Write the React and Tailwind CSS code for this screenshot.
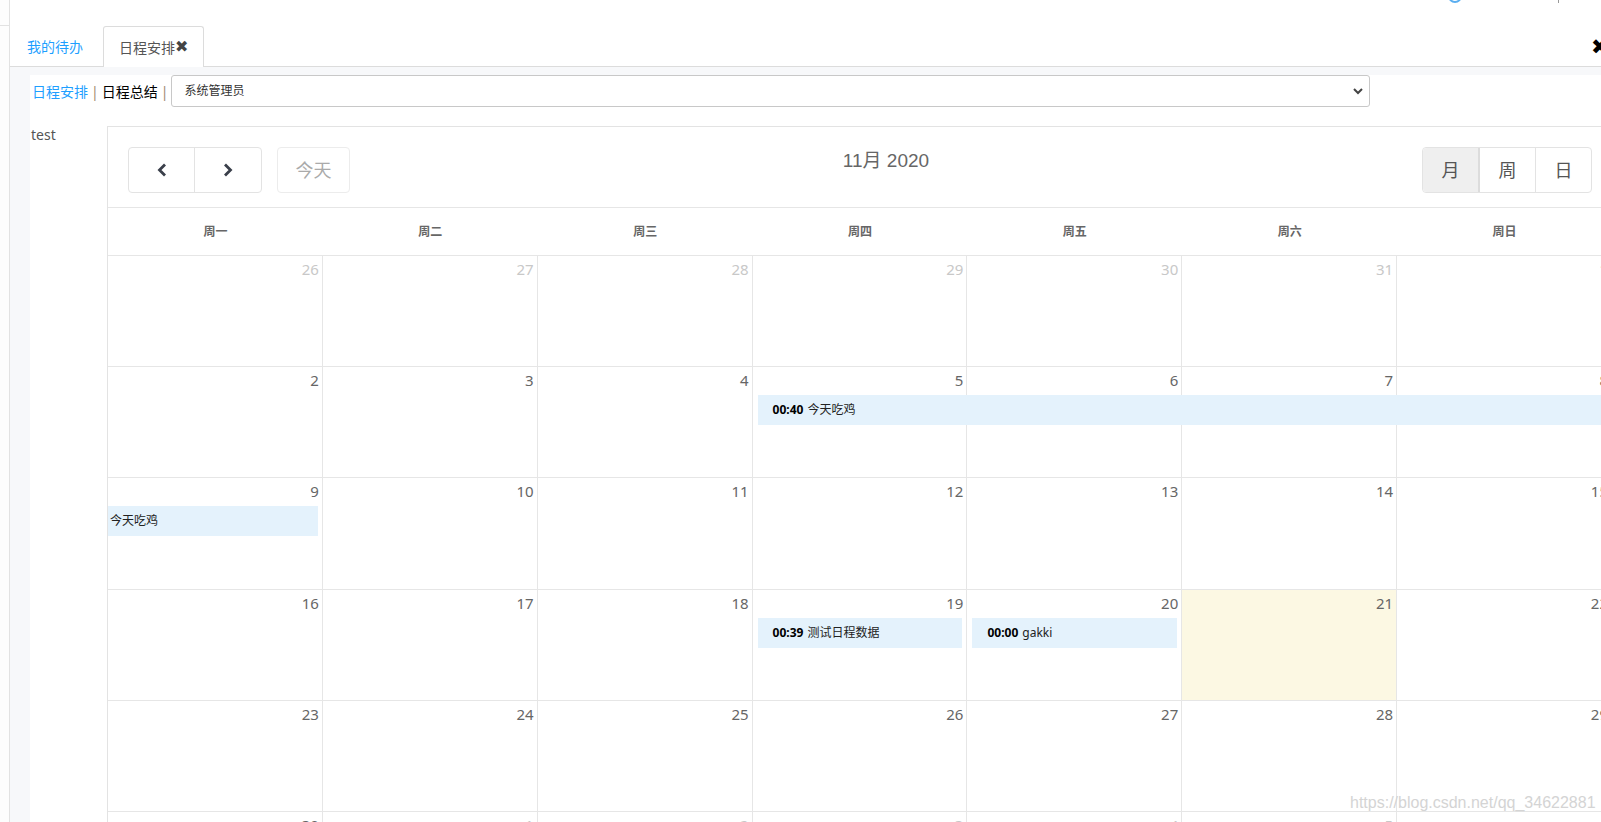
import React from "react";

const weeks = [
  [[26, 1], [27, 1], [28, 1], [29, 1], [30, 1], [31, 1], [1, 0]],
  [[2, 0], [3, 0], [4, 0], [5, 0], [6, 0], [7, 0], [8, 0]],
  [[9, 0], [10, 0], [11, 0], [12, 0], [13, 0], [14, 0], [15, 0]],
  [[16, 0], [17, 0], [18, 0], [19, 0], [20, 0], [21, 0], [22, 0]],
  [[23, 0], [24, 0], [25, 0], [26, 0], [27, 0], [28, 0], [29, 0]],
  [[30, 0], [1, 1], [2, 1], [3, 1], [4, 1], [5, 1], [6, 1]],
];

const heads = ["周一", "周二", "周三", "周四", "周五", "周六", "周日"];

function Ev({ cls, time, title }) {
  return (
    <div className={"h-[30px] leading-[30px] bg-[#e4f2fc] text-[12px] text-[#222] whitespace-nowrap overflow-hidden " + cls}>
      {time ? <b className="text-black font-bold mr-[4px]">{time}</b> : null}
      {title}
    </div>
  );
}

function WeekEvents({ w }) {
  if (w === 1)
    return <Ev cls="col-start-4 col-span-4 ml-[5px] pl-[15px]" time="00:40" title="今天吃鸡" />;
  if (w === 2)
    return <Ev cls="col-start-1 col-span-1 mr-[5px] pl-[2px]" title="今天吃鸡" />;
  if (w === 3)
    return (
      <>
        <Ev cls="col-start-4 col-span-1 mx-[5px] pl-[15px]" time="00:39" title="测试日程数据" />
        <Ev cls="col-start-5 col-span-1 mx-[5px] pl-[15px]" time="00:00" title="gakki" />
      </>
    );
  return null;
}

export default function App() {
  return (
    <div className="relative w-[1601px] h-[822px] overflow-hidden bg-white flex font-['Noto_Sans','Noto_Sans_CJK_SC',sans-serif] text-[#333]">
      {/* top-right partial icons */}
      <div className="absolute left-[1448px] top-[-11px] w-[14px] h-[14px] rounded-full border-2 border-[#5aaef0]" />
      <div className="absolute left-[1558px] top-0 w-px h-[3px] bg-[#999]" />
      <div className="absolute left-[1591px] top-[33px] text-[21px] leading-[28px] text-black font-['DejaVu_Sans',sans-serif]">✖</div>

      {/* left strip */}
      <div className="w-[10px] shrink-0 border-r border-[#e2e2e2] bg-[#fdfdfd]">
        <div className="h-[26px] border-b border-[#e2e2e2]" />
      </div>

      {/* main */}
      <div className="flex-1 min-w-0 flex flex-col">
        {/* tab bar */}
        <div className="h-[67px] shrink-0 border-b border-[#dcdcdc] flex items-end">
          <div className="w-[93px] h-[40px] pl-[17px] flex items-center text-[14px] text-[#1e9fff]">我的待办</div>
          <div className="w-[101px] h-[41px] -mb-px border border-b-0 border-[#dcdcdc] rounded-t-[3px] bg-white flex items-center pl-[15px] text-[14px] text-[#555]">
            日程安排<span className="font-['DejaVu_Sans',sans-serif] text-[16px] text-[#444] leading-none">✖</span>
          </div>
        </div>

        {/* body */}
        <div className="flex-1 bg-[#f7f8fa] pt-[8px] pl-[20px] flex">
          <div className="flex-1 bg-white flex flex-col">
            {/* row 1 */}
            <div className="h-[32px] flex items-center text-[14px]">
              <span className="pl-[2px] text-[#1e9fff]">日程安排</span>
              <span className="mx-[3px] text-[#a08870]">|</span>
              <span className="text-black">日程总结</span>
              <span className="mx-[3px] text-[#a08870]">|</span>
              <div className="w-[1199px] h-[32px] border border-[#c8c8c8] rounded-[3px] flex items-center justify-between pl-[12px] pr-[5px] text-[12px] text-[#333]">
                <span>系统管理员</span>
                <svg width="12" height="8" viewBox="0 0 12 8">
                  <path d="M2 2 L6 6 L10 2" fill="none" stroke="#444" strokeWidth="2" />
                </svg>
              </div>
            </div>

            {/* row 2 */}
            <div className="mt-[19px] flex">
              <div className="w-[77px] shrink-0 pl-[1px] text-[14px] leading-[18px] text-[#555]">test</div>
              <div className="w-[1505px] shrink-0 border-l border-t border-[#e3e3e3]">
                {/* toolbar */}
                <div className="h-[80px] px-[20px] pt-[20px] flex justify-between items-start">
                  <div className="flex">
                    <div className="flex h-[46px] border border-[#e3e3e3] rounded-[4px]">
                      <div className="w-[66px] flex items-center justify-center border-r border-[#e3e3e3]">
                        <svg width="12" height="14" viewBox="0 0 12 14">
                          <path d="M9 1.5 L3.5 7 L9 12.5" fill="none" stroke="#3a3f4a" strokeWidth="2.8" />
                        </svg>
                      </div>
                      <div className="w-[66px] flex items-center justify-center">
                        <svg width="12" height="14" viewBox="0 0 12 14">
                          <path d="M3 1.5 L8.5 7 L3 12.5" fill="none" stroke="#3a3f4a" strokeWidth="2.8" />
                        </svg>
                      </div>
                    </div>
                    <div className="ml-[15px] w-[73px] h-[46px] border border-[#ececec] rounded-[4px] flex items-center justify-center text-[18px] text-[#aaa]">
                      今天
                    </div>
                  </div>
                  <div className="pt-[1px] text-[19px] leading-[26px] text-[#666] font-['Liberation_Sans','Noto_Sans_CJK_SC',sans-serif]">11月 2020</div>
                  <div className="flex h-[46px] border border-[#e3e3e3] rounded-[4px] text-[18px] text-[#555]">
                    <div className="w-[57px] flex items-center justify-center bg-[#efefef] border-r-2 border-[#dcdcdc] rounded-l-[4px]">月</div>
                    <div className="w-[56px] flex items-center justify-center border-r border-[#e3e3e3]">周</div>
                    <div className="w-[55px] flex items-center justify-center">日</div>
                  </div>
                </div>

                {/* header */}
                <div className="h-[49px] border-t border-b border-[#e6e6e6] grid grid-cols-7">
                  {heads.map((h) => (
                    <div key={h} className="flex items-center justify-center text-[12px] font-bold text-[#666]">{h}</div>
                  ))}
                </div>

                {/* weeks */}
                {weeks.map((wk, wi) => (
                  <div key={wi} className="relative h-[111.2px] border-b border-[#e6e6e6]">
                    <div className="grid grid-cols-7 h-full">
                      {wk.map(([d, other], di) => (
                        <div
                          key={di}
                          className={
                            "border-r border-[#e6e6e6] text-right pr-[3px] pt-[4px] text-[15px] leading-[18px] " +
                            (other ? "text-[#c8c8c8] " : "text-[#666] ") +
                            (wi === 3 && di === 5 ? "bg-[#fcf8e3]" : "")
                          }
                        >
                          {d}
                        </div>
                      ))}
                    </div>
                    <div className="absolute left-0 right-0 top-[28px] grid grid-cols-7">
                      <WeekEvents w={wi} />
                    </div>
                  </div>
                ))}
              </div>
            </div>
          </div>
        </div>
      </div>

      {/* watermark */}
      <div className="absolute left-[1350px] top-[793px] text-[16px] leading-[20px] text-[#d4d4d4] font-['Liberation_Sans',sans-serif] pointer-events-none">
        https://blog.csdn.net/qq_34622881
      </div>
    </div>
  );
}
